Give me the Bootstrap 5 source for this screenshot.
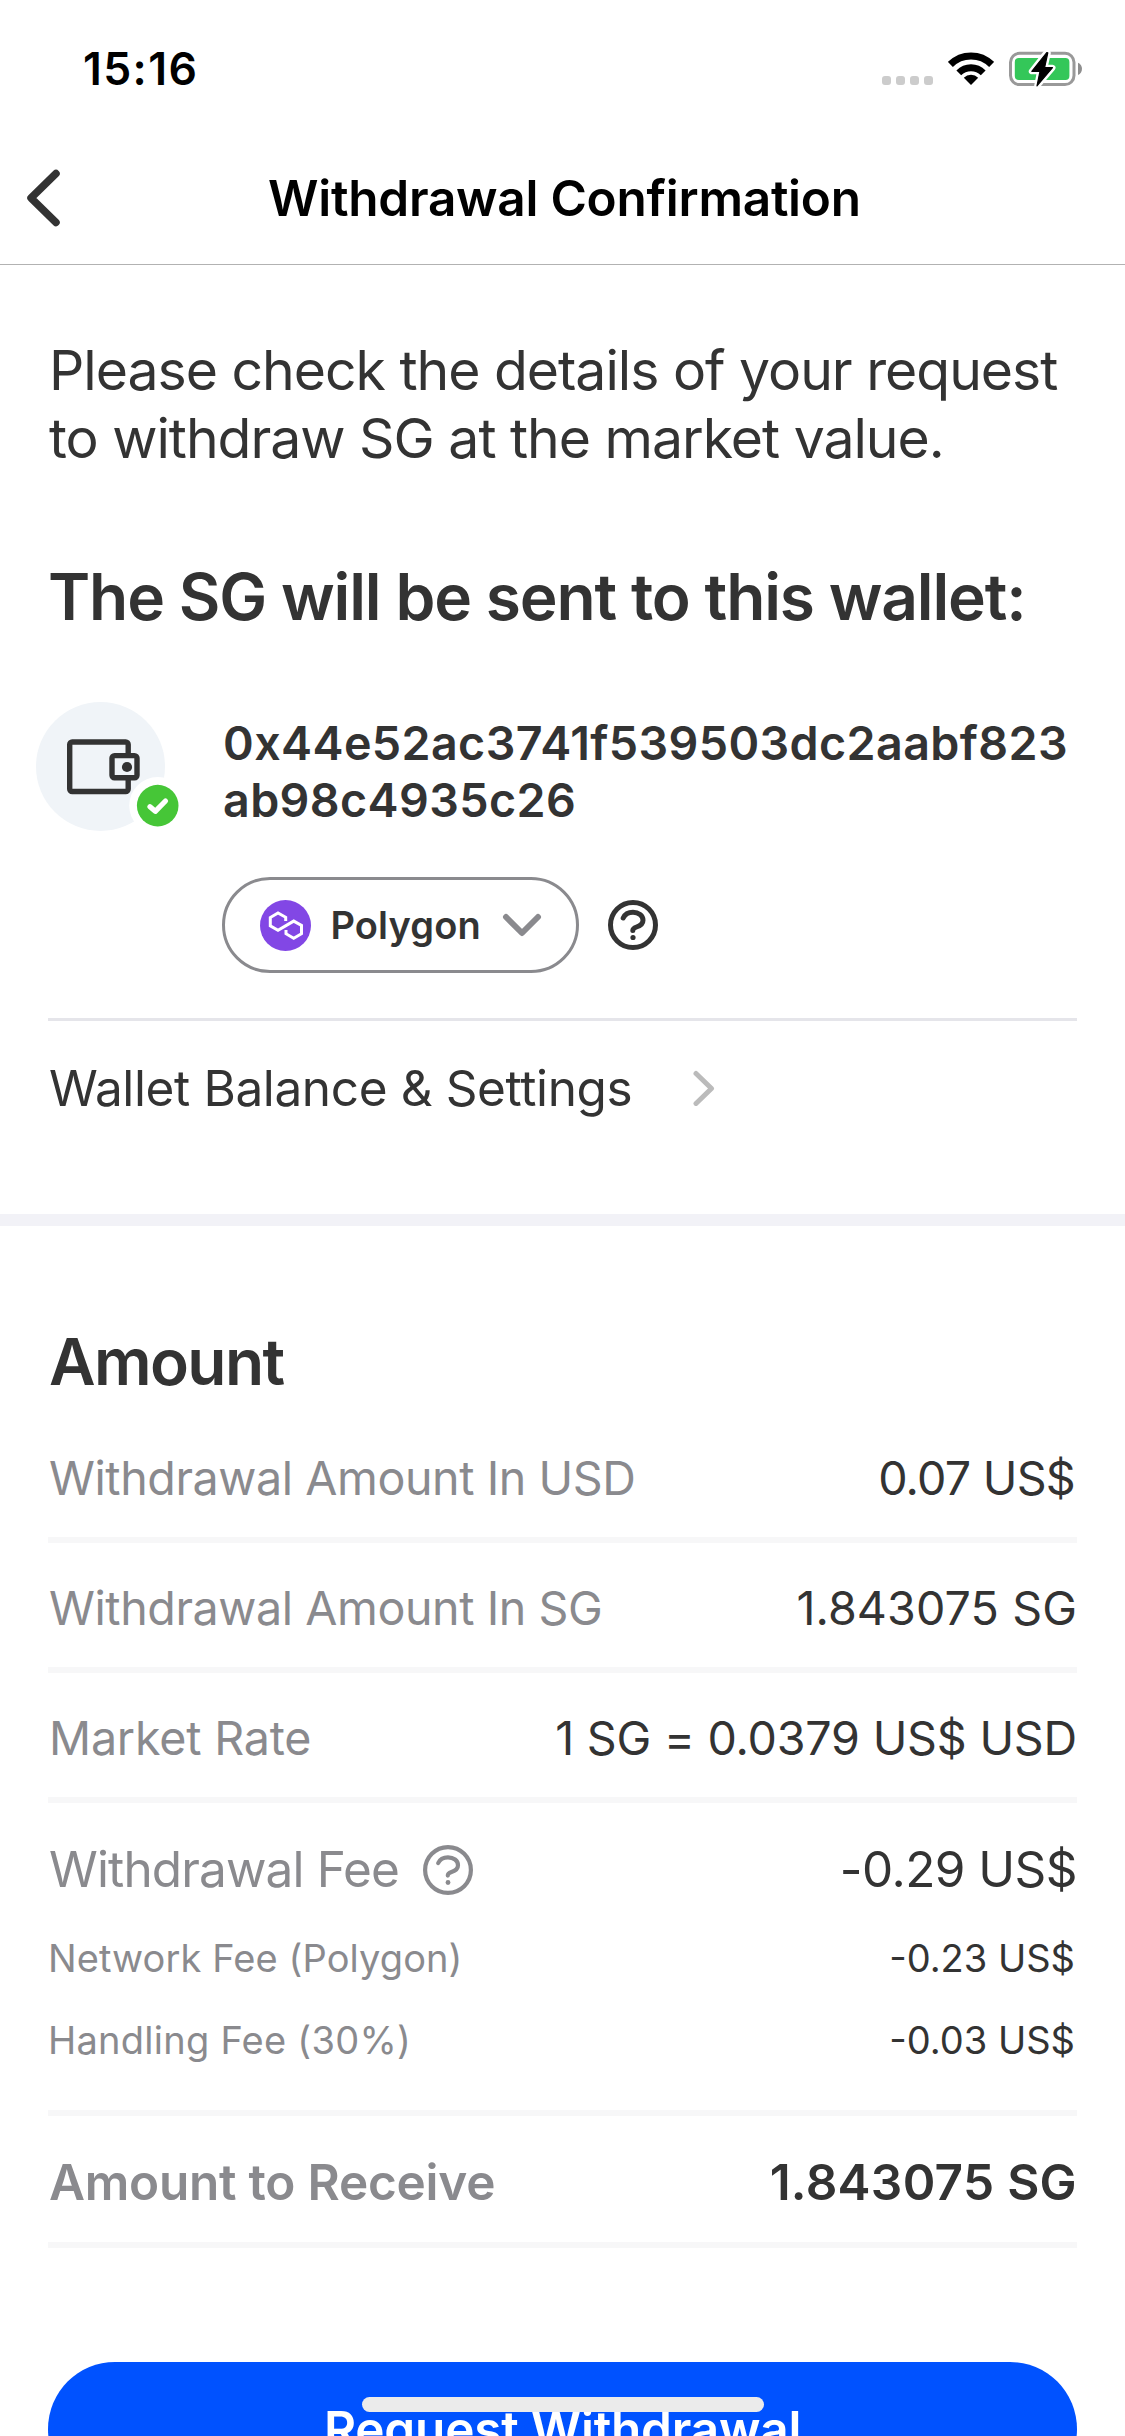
<!DOCTYPE html>
<html lang="en">
<head>
<meta charset="utf-8">
<meta name="viewport" content="width=device-width, initial-scale=1">
<title>Withdrawal Confirmation</title>
<link href="https://cdn.jsdelivr.net/npm/bootstrap@5.3.0/dist/css/bootstrap.min.css" rel="stylesheet">
<style>
  html, body { height: 2436px; overflow: hidden; }
  body { font-family: Inter, "Liberation Sans", sans-serif; color: #333; background: #fff; font-kerning: normal; }
  svg { display: block; flex: none; }
  .screen { width: 1125px; height: 2436px; }
  .gutter { padding-left: 48px; padding-right: 48px; }

  .status { height: 138px; padding: 0 42px 0 83px; color: #000; }
  .clock { font-size: 44.5px; font-weight: 600; letter-spacing: 1.4px; line-height: 139px; }
  .signal { gap: 4.7px; margin: 60px 15px 0 0; }
  .signal i { width: 9.3px; height: 9.3px; border-radius: 3px; background: #ccc; }
  .wifi { margin-top: 35px; }
  .battery { margin: 34px 0 0 14px; }

  .topbar { height: 127px; border-bottom: 1px solid #b2b2b2; padding-left: 23px; }
  .topbar h1 { font-size: 49.5px; font-weight: 600; letter-spacing: -.25px; line-height: 60px; color: #000; margin: 30px 0 0 205px; }
  .topbar svg { margin-top: 27px; }

  .intro { font-size: 55.3px; line-height: 67.5px; letter-spacing: -1.01px; padding-top: 71px; padding-left: 49px; margin-bottom: 86px; white-space: nowrap; }
  .title { font-size: 64px; font-weight: 600; letter-spacing: -1.15px; line-height: 80px; margin: 0; }
  .title-short { letter-spacing: -1.6px; padding-left: 1px; }
  .wallet-row { padding-left: 36px; height: 175px; margin-top: 65px; }
  .wallet-art { width: 143px; margin: 0 44px 0 0; }
  .address { font-size: 46.6px; font-weight: 600; letter-spacing: .395px; line-height: 57px; padding-top: 13px; }
  .network { padding-left: 222px; gap: 29px; height: 96px; }
  .network .btn { width: 357px; height: 96px; border: 3px solid #8a8a8e; padding: 0 34px 0 34.5px; color: #333;
    font-size: 38px; font-weight: 600; letter-spacing: .12px; line-height: 1; }
  .network .btn span { margin-left: 20px; }
  .rule { height: 3px; background: #e5e5ea; margin: 45px 48px 0; }
  .settings { height: 134px; font-size: 49.5px; letter-spacing: -.374px; color: #333; gap: 60px; padding-left: 49px; }
  .band { height: 12px; background: #f2f2f7; margin-top: 59px; }

  .amounts { padding-top: 96px; }
  .line { height: 130px; padding-top: 6px; border-bottom: 6px solid #f7f7f8; font-size: 46.6px; line-height: 1; }
  .title + .line { margin-top: 11px; }
  .line-label { color: #8a8a8e; letter-spacing: -.42px; padding-left: 1px; }
  .tall { font-size: 49.5px; line-height: 1; }
  .fee { height: 114px; padding-top: 20px; gap: 24px; }
  .fee .line-label { letter-spacing: -.86px; }
  .minor { height: 82px; font-size: 38px; line-height: 1; padding-right: 2px; }
  .minor .line-label { letter-spacing: .1px; padding-left: 0; }
  .minor .line-label.wide { letter-spacing: .25px; }
  .fees { height: 313px; border-bottom: 6px solid #f7f7f8; }
  .total { height: 132px; padding-top: 8px; border-bottom: 6px solid #f7f7f8; font-weight: 600; }
  .total .line-label { letter-spacing: -.24px; }
  .rate, .line-label.rate { letter-spacing: -.2px; }
  .usd { letter-spacing: -.75px; padding-right: 2px; }
  .fee-usd { letter-spacing: -.55px; }
  .sg { letter-spacing: .1px; }
  .sg-bold { letter-spacing: .29px; }
  .submit { height: 134px; width: 1029px; margin: 114px 0 0 48px; background: #0052ff; color: #fff; border: 0;
    font-size: 49.5px; font-weight: 600; letter-spacing: -.22px; flex: none; }
  .home-bar { left: 362px; top: 2397px; width: 402px; height: 15px; background: #ebebeb; }
</style>
</head>
<body>
<div class="screen d-flex flex-column position-relative overflow-hidden">

  <div class="status d-flex justify-content-between align-items-start flex-shrink-0">
    <div class="clock">15:16</div>
    <div class="d-flex align-items-start pt-3">
      <div class="signal d-flex"><i></i><i></i><i></i><i></i></div>
      <svg class="wifi" width="46" height="35" viewBox="0 0 46 35" fill="none" stroke="#000">
        <path d="M2.4 13.4A29.2 29.2 0 0 1 43.6 13.4" stroke-width="7"/>
        <path d="M10.8 21.8A17.3 17.3 0 0 1 35.2 21.8" stroke-width="6.8"/>
        <path d="M23 34L15.8 26.8A10.2 10.2 0 0 1 30.2 26.8Z" fill="#000" stroke="none"/>
      </svg>
      <svg class="battery" width="75" height="38" viewBox="0 0 75 38">
        <rect x="2.5" y="3.3" width="63.5" height="31.3" rx="9" fill="none" stroke="#999" stroke-width="3"/>
        <rect x="6.8" y="8" width="54.6" height="22" rx="4" fill="#34c759"/>
        <path d="M70 12.7C75.3 14.5 75.3 23.2 70 25Z" fill="#8e8e8e"/>
        <path d="M38.5 2.5L23.8 21.3H32L29.2 35.8L44.5 17.7H36.6L39.8 3Z" fill="#fff" stroke="#fff" stroke-width="6" stroke-linejoin="round"/>
        <path d="M38.8 2.5L23.8 21.3H32L29 35.8L44.5 17.7H36.6L39.8 2.8Z" stroke="#000" stroke-width="1.2" stroke-linejoin="round"/>
      </svg>
    </div>
  </div>

  <header class="topbar d-flex align-items-start flex-shrink-0">
    <svg width="40" height="66" viewBox="0 0 40 66" fill="none" stroke="#333" stroke-width="7.5" stroke-linecap="round" stroke-linejoin="round"><path d="M33 8.5L8 33L33 57.5"/></svg>
    <h1 class="text-nowrap">Withdrawal Confirmation</h1>
  </header>

  <main>
    <section>
      <p class="gutter intro">Please check the details of your request<br>to withdraw SG at the market value.</p>
      <h2 class="title gutter text-nowrap">The SG will be sent to this wallet:</h2>

      <div class="wallet-row d-flex">
        <svg class="wallet-art" width="143" height="132" viewBox="0 0 143 132" fill="none">
          <circle cx="64.5" cy="64.5" r="64.5" fill="#f0f4f8"/>
          <rect x="33.7" y="40" width="58.5" height="49.5" rx="2.5" stroke="#333" stroke-width="5.4"/>
          <rect x="76" y="53.6" width="25" height="22.2" rx="2.5" fill="#f0f4f8" stroke="#333" stroke-width="5.4"/>
          <circle cx="91" cy="65" r="5.1" fill="#333"/>
          <circle cx="121.7" cy="103.6" r="28.5" fill="#fff"/>
          <circle cx="121.7" cy="103.6" r="20.8" fill="#46c637"/>
          <path d="M114 104.8L119.3 109.3L129.5 99" stroke="#fff" stroke-width="5.2" stroke-linecap="round" stroke-linejoin="round"/>
        </svg>
        <div class="address">0x44e52ac3741f539503dc2aabf823<br>ab98c4935c26</div>
      </div>

      <div class="network d-flex align-items-center">
        <button class="btn rounded-pill d-flex align-items-center">
          <svg width="51" height="51" viewBox="9.5 9.5 51 51" fill="none">
            <circle cx="35" cy="35" r="25.5" fill="#8247e5"/>
            <path d="M35.2 30.6V26.8L27.5 22.4L19.8 27V35.4L27.5 39.8L43.2 30.6L51 35V43.2L43.2 47.7L35.5 43.2V39.4" stroke="#fff" stroke-width="3"/>
          </svg>
          <span>Polygon</span>
          <svg class="ms-auto" width="40" height="24" viewBox="0 0 40 24" fill="none" stroke="#8a8a8e" stroke-width="6" stroke-linecap="round" stroke-linejoin="round"><path d="M4 4L20 20L36 4"/></svg>
        </button>
        <svg width="50" height="50" viewBox="0 0 50 50" fill="none" stroke="#333" stroke-width="5" stroke-linecap="round">
          <circle cx="25" cy="25" r="22.5"/>
          <path d="M15.2 18C17 14 21 12.3 25 12.3C30.5 12.3 35 15.5 35 20.2C35 24.6 31.5 26 28.5 27C26 27.9 24.8 28.8 24.8 30.6"/>
          <circle cx="25" cy="37.5" r="2.6" fill="#333" stroke="none"/>
        </svg>
      </div>
      <div class="rule"></div>
      <a href="#" class="gutter settings d-flex align-items-center text-decoration-none">
        <span>Wallet Balance &amp; Settings</span>
        <svg width="24" height="36" viewBox="0 0 24 36" fill="none" stroke="#bbb" stroke-width="5" stroke-linecap="round" stroke-linejoin="round"><path d="M4 3.5L19.5 18.5L4 33.5"/></svg>
      </a>
      <div class="band"></div>
    </section>

    <section class="amounts gutter">
      <h2 class="title title-short">Amount</h2>
      <div class="line d-flex justify-content-between align-items-center">
        <span class="line-label">Withdrawal Amount In USD</span><span class="usd">0.07 US$</span>
      </div>
      <div class="line d-flex justify-content-between align-items-center">
        <span class="line-label">Withdrawal Amount In SG</span><span class="sg">1.843075 SG</span>
      </div>
      <div class="line d-flex justify-content-between align-items-center">
        <span class="line-label rate">Market Rate</span><span class="rate">1 SG = 0.0379 US$ USD</span>
      </div>
      <div class="fees">
        <div class="fee tall d-flex align-items-center">
          <span class="line-label">Withdrawal Fee</span>
          <svg width="50" height="50" viewBox="0 0 50 50" fill="none" stroke="#8a8a8e" stroke-width="4.2" stroke-linecap="round">
            <circle cx="25" cy="25" r="22.9"/>
            <path d="M15.2 18C17 14 21 12.3 25 12.3C30.5 12.3 35 15.5 35 20.2C35 24.6 31.5 26 28.5 27C26 27.9 24.8 28.8 24.8 30.6"/>
            <circle cx="25" cy="37.5" r="2.4" fill="#8a8a8e" stroke="none"/>
          </svg>
          <span class="ms-auto fee-usd">-0.29 US$</span>
        </div>
        <div class="minor d-flex justify-content-between align-items-center">
          <span class="line-label">Network Fee (Polygon)</span><span>-0.23 US$</span>
        </div>
        <div class="minor d-flex justify-content-between align-items-center">
          <span class="line-label wide">Handling Fee (30%)</span><span>-0.03 US$</span>
        </div>
      </div>
      <div class="total tall d-flex justify-content-between align-items-center">
        <span class="line-label">Amount to Receive</span><span class="sg-bold">1.843075 SG</span>
      </div>
    </section>
  </main>

  <button class="submit btn rounded-pill">Request Withdrawal</button>
  <div class="home-bar position-absolute rounded-pill"></div>
</div>
<script src="https://cdn.jsdelivr.net/npm/bootstrap@5.3.0/dist/js/bootstrap.bundle.min.js"></script>
</body>
</html>
